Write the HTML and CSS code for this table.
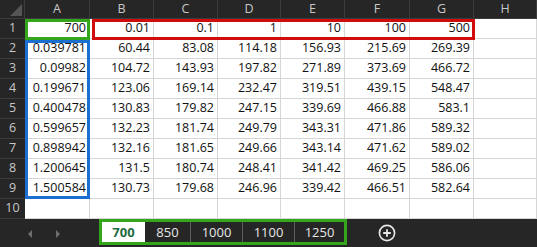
FILE: index.html
```html
<!DOCTYPE html>
<html>
<head>
<meta charset="utf-8">
<link rel="stylesheet" href="styles.css">
</head>
<body>
<div class="wrap">
<div class="sheet">
  <div class="corner"><svg width="12" height="12" viewBox="0 0 12 12"><polygon points="12,0 12,12 0,12" fill="#555"/></svg></div>
  <div class="ch">A</div><div class="ch">B</div><div class="ch">C</div><div class="ch">D</div><div class="ch">E</div><div class="ch">F</div><div class="ch">G</div><div class="ch">H</div>

  <div class="rh">1</div><div class="c">700</div><div class="c">0.01</div><div class="c">0.1</div><div class="c">1</div><div class="c">10</div><div class="c">100</div><div class="c">500</div><div class="c"></div>
  <div class="rh">2</div><div class="c">0.039781</div><div class="c">60.44</div><div class="c">83.08</div><div class="c">114.18</div><div class="c">156.93</div><div class="c">215.69</div><div class="c">269.39</div><div class="c"></div>
  <div class="rh">3</div><div class="c">0.09982</div><div class="c">104.72</div><div class="c">143.93</div><div class="c">197.82</div><div class="c">271.89</div><div class="c">373.69</div><div class="c">466.72</div><div class="c"></div>
  <div class="rh">4</div><div class="c">0.199671</div><div class="c">123.06</div><div class="c">169.14</div><div class="c">232.47</div><div class="c">319.51</div><div class="c">439.15</div><div class="c">548.47</div><div class="c"></div>
  <div class="rh">5</div><div class="c">0.400478</div><div class="c">130.83</div><div class="c">179.82</div><div class="c">247.15</div><div class="c">339.69</div><div class="c">466.88</div><div class="c">583.1</div><div class="c"></div>
  <div class="rh">6</div><div class="c">0.599657</div><div class="c">132.23</div><div class="c">181.74</div><div class="c">249.79</div><div class="c">343.31</div><div class="c">471.86</div><div class="c">589.32</div><div class="c"></div>
  <div class="rh">7</div><div class="c">0.898942</div><div class="c">132.16</div><div class="c">181.65</div><div class="c">249.66</div><div class="c">343.14</div><div class="c">471.62</div><div class="c">589.02</div><div class="c"></div>
  <div class="rh">8</div><div class="c">1.200645</div><div class="c">131.5</div><div class="c">180.74</div><div class="c">248.41</div><div class="c">341.42</div><div class="c">469.25</div><div class="c">586.06</div><div class="c"></div>
  <div class="rh">9</div><div class="c">1.500584</div><div class="c">130.73</div><div class="c">179.68</div><div class="c">246.96</div><div class="c">339.42</div><div class="c">466.51</div><div class="c">582.64</div><div class="c"></div>
  <div class="rh">10</div><div class="c"></div><div class="c"></div><div class="c"></div><div class="c"></div><div class="c"></div><div class="c"></div><div class="c"></div><div class="c"></div>
</div>
<div class="marks">
  <div class="hl hl-green"></div>
  <div class="hl hl-red"></div>
  <div class="hl hl-blue"></div>
</div>
</div>
<div class="tabbar">
  <div class="nav">
    <svg width="8" height="10" viewBox="0 0 8 10"><polygon points="6,1 6,9 2,5" fill="#6e6e6e"/></svg>
    <svg width="8" height="10" viewBox="0 0 8 10"><polygon points="2,1 2,9 6,5" fill="#6e6e6e"/></svg>
  </div>
  <div class="tabs">
    <div class="tab active">700</div>
    <div class="tab w45">850</div>
    <div class="tab w52 sep">1000</div>
    <div class="tab w52 sep">1100</div>
    <div class="tab w50 sep">1250</div>
  </div>
  <div class="add">
    <svg width="18" height="18" viewBox="0 0 18 18"><circle cx="9" cy="9" r="7.6" fill="none" stroke="#e8e8e8" stroke-width="1.6"/><path d="M9 5.2V12.8M5.2 9H12.8" stroke="#e8e8e8" stroke-width="1.8"/></svg>
  </div>
</div>
</body>
</html>
```

FILE: styles.css
```css
* { box-sizing: border-box; }
html, body { margin: 0; padding: 0; }
body {
  width: 537px;
  height: 247px;
  overflow: hidden;
  background: #262626;
  font-family: "Open Sans", "Noto Sans", sans-serif;
  font-size: 12.5px;
}
.wrap {
  display: grid;
}
.sheet, .marks {
  grid-area: 1 / 1;
  display: grid;
  grid-template-columns: 25px 65px 64px 64px 63px 64px 65px 64px 1fr;
  grid-template-rows: 19px repeat(10, 20px);
}
.sheet { background: #fff; }
.marks { pointer-events: none; z-index: 2; }
.corner {
  background: #262626;
  border-right: 1px solid #3c3c3c;
  border-bottom: 1px solid #3c3c3c;
  display: flex;
  align-items: flex-end;
  justify-content: flex-end;
  padding: 0 2px 2px 0;
}
.ch {
  background: #262626;
  color: #c8c8c8;
  border-right: 1px solid #3c3c3c;
  border-bottom: 1px solid #3c3c3c;
  display: flex;
  align-items: center;
  justify-content: center;
  line-height: 1;
}
.rh {
  background: #262626;
  color: #c8c8c8;
  border-bottom: 1px solid #3c3c3c;
  display: flex;
  align-items: center;
  justify-content: center;
  line-height: 1;
}
.c {
  background: #fff;
  color: #111;
  border-right: 1px solid #d6d6d6;
  border-bottom: 1px solid #d6d6d6;
  display: flex;
  align-items: center;
  justify-content: flex-end;
  padding-right: 3px;
  line-height: 1;
}
.hl-green {
  grid-row: 2;
  grid-column: 2;
  border: 3px solid #35a51b;
  margin-bottom: -1px;
}
.hl-red {
  grid-row: 2;
  grid-column: 3 / 9;
  border: 3px solid #d10c0c;
  margin-left: 2px;
  margin-bottom: -1px;
  margin-right: -1px;
}
.hl-blue {
  grid-row: 3 / 11;
  grid-column: 2;
  border: 3px solid #1a6fd1;
  margin-top: 1px;
}
.tabbar {
  height: 28px;
  background: #262626;
  display: flex;
  align-items: flex-start;
}
.nav {
  width: 99px;
  height: 28px;
  display: flex;
  align-items: center;
  gap: 20px;
  padding-left: 26px;
  padding-top: 1px;
}
.tabs {
  display: flex;
  border: 3px solid #35a51b;
  height: 26px;
}
.tab {
  width: 43px;
  height: 20px;
  display: flex;
  align-items: center;
  justify-content: center;
  color: #e6e6e6;
  font-size: 13px;
}
.tab.active {
  background: #fff;
  color: #1e6b40;
  font-weight: 700;
}
.w45 { width: 45px; }
.w52 { width: 52px; }
.w50 { width: 50px; }
.sep { border-left: 1px solid #5e5e5e; }
.add {
  margin-left: 31px;
  height: 28px;
  display: flex;
  align-items: center;
  padding-bottom: 1px;
}
```
